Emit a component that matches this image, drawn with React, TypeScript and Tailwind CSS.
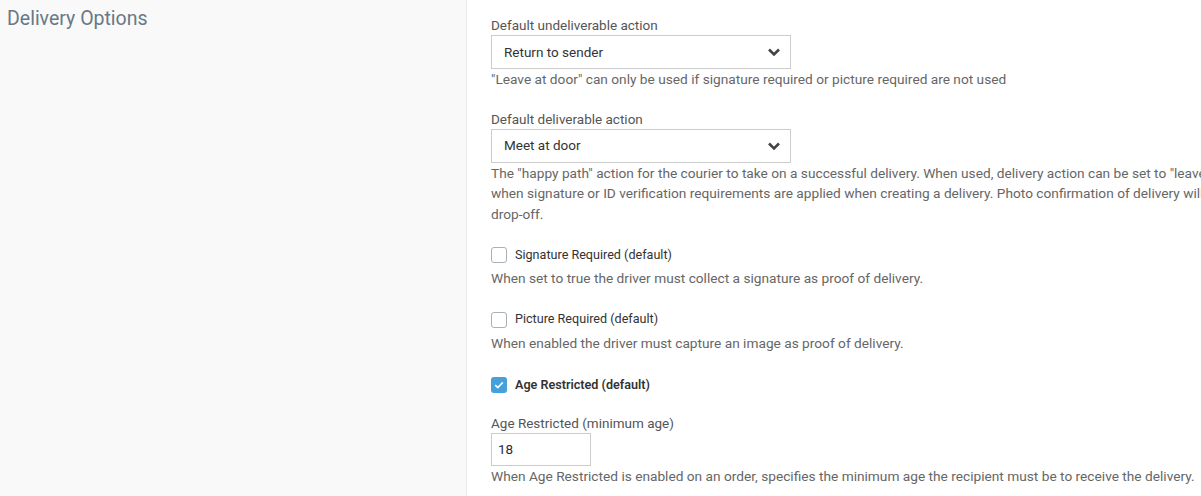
import React from "react";

const font = { fontFamily: "Roboto, 'Noto Sans', sans-serif" };

type SelectProps = { value: string };

const FakeSelect: React.FC<SelectProps> = ({ value }) => {
  return (
    <div className="mt-[1px] flex h-[34px] w-[300px] items-center justify-between border border-[#cccccc] bg-white pl-[12px] pr-[9px] text-[13.5px] text-[#333]">
      <span>{value}</span>
      <svg width="14" height="10" viewBox="0 0 14 10">
        <path d="M2 2.5 L7 7.5 L12 2.5" fill="none" stroke="#444" strokeWidth="2.6" />
      </svg>
    </div>
  );
};

type CheckProps = { label: string; checked?: boolean };

const Check: React.FC<CheckProps> = ({ label, checked }) => {
  return (
    <div className="flex h-[16px] items-center gap-[8px]">
      {checked ? (
        <span className="flex h-[16px] w-[16px] items-center justify-center rounded-[3px] bg-[#45a0db]">
          <svg width="10" height="8" viewBox="0 0 10 8">
            <path d="M1.2 4.2 L3.8 6.6 L8.8 1.4" fill="none" stroke="white" strokeWidth="1.6" />
          </svg>
        </span>
      ) : (
        <span className="h-[16px] w-[16px] rounded-[3px] border border-[#a9b0b8] bg-white" />
      )}
      <span className={`text-[12.6px] text-[#333] ${checked ? "font-semibold" : ""}`}>{label}</span>
    </div>
  );
};

export default function App() {
  return (
    <div className="flex h-[496px] w-[1201px] overflow-hidden bg-white" style={font}>
      <div className="w-[467px] shrink-0 border-r border-[#ececec] bg-[#f9f9f9] px-[7px] pt-[7px]">
        <p className="text-[19.5px] leading-[24px] text-[#687888]">Delivery Options</p>
      </div>
      <div className="min-w-0 flex-1 overflow-hidden whitespace-nowrap pl-[24px] pt-[16px] text-[13.7px] leading-[20.5px]">
        <p className="text-[13.5px] leading-[18px] text-[#555]">Default undeliverable action</p>
        <FakeSelect value="Return to sender" />
        <p className="text-[#666]">
          "Leave at door" can only be used if signature required or picture required are not used
        </p>

        <p className="mt-[20px] text-[13.5px] leading-[18px] text-[#555]">Default deliverable action</p>
        <FakeSelect value="Meet at door" />
        <p className="text-[#666]">
          The "happy path" action for the courier to take on a successful delivery. When used, delivery action can be set to "leave at door"
          <br />
          when signature or ID verification requirements are applied when creating a delivery. Photo confirmation of delivery will be required at
          <br />
          drop-off.
        </p>

        <div className="mt-[23px]">
          <Check label="Signature Required (default)" />
        </div>
        <p className="mt-[5px] text-[#666]">When set to true the driver must collect a signature as proof of delivery.</p>

        <div className="mt-[23px]">
          <Check label="Picture Required (default)" />
        </div>
        <p className="mt-[5px] text-[#666]">When enabled the driver must capture an image as proof of delivery.</p>

        <div className="mt-[24px]">
          <Check label="Age Restricted (default)" checked />
        </div>
        <p className="mt-[21px] text-[13.5px] leading-[18px] text-[#555]">Age Restricted (minimum age)</p>
        <div className="mt-[1px] flex h-[33px] w-[100px] items-center border border-[#cccccc] bg-white px-[6px] text-[13.5px] text-[#2a2a44]">
          18
        </div>
        <p className="text-[#666]">
          When Age Restricted is enabled on an order, specifies the minimum age the recipient must be to receive the delivery.
        </p>
      </div>
    </div>
  );
}
